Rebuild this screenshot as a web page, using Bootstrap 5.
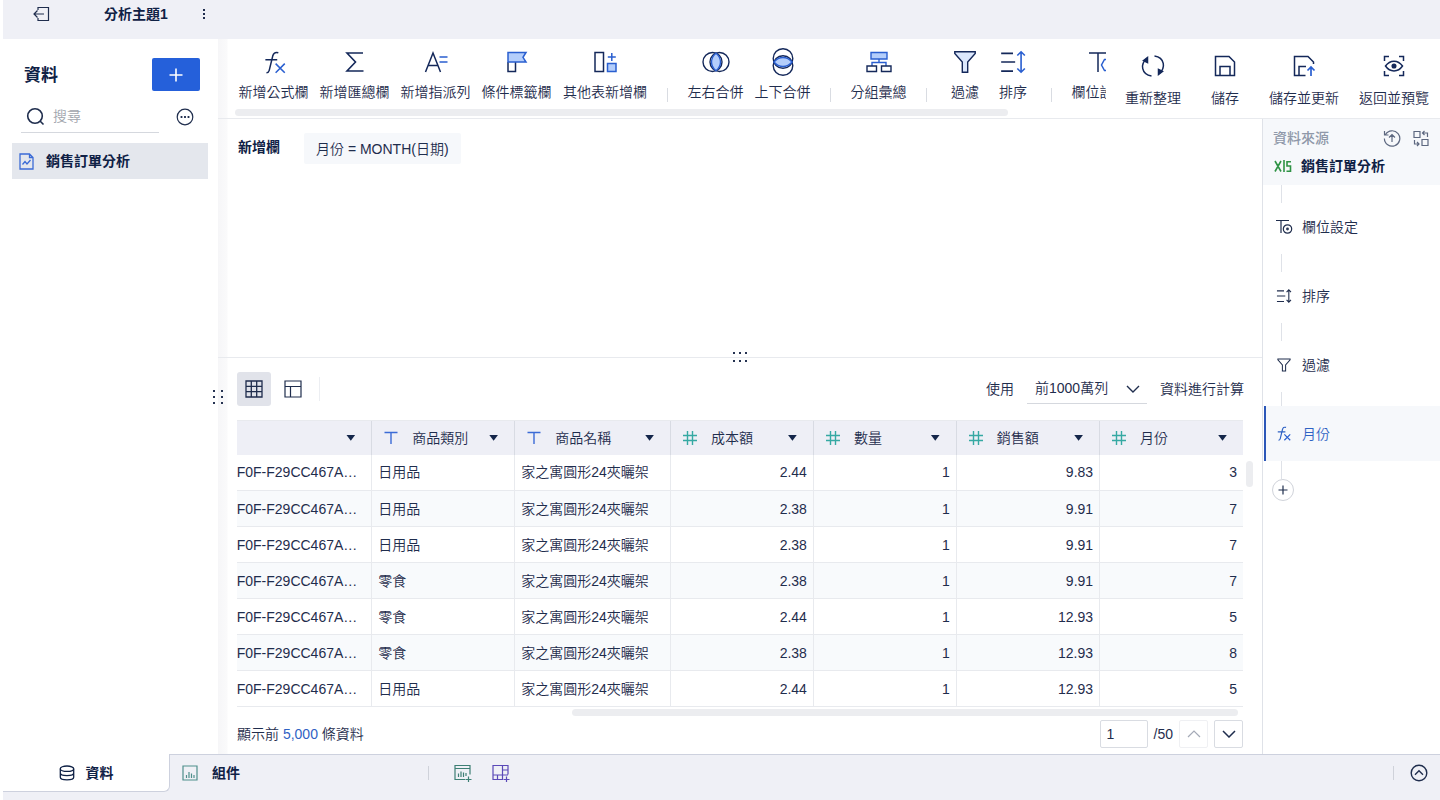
<!DOCTYPE html>
<html lang="zh-Hant">
<head>
<meta charset="utf-8">
<meta name="viewport" content="width=device-width, initial-scale=1">
<title>分析主題1</title>
<link href="https://cdn.jsdelivr.net/npm/bootstrap@5.3.0/dist/css/bootstrap.min.css" rel="stylesheet">
<style>
  :root { --ink: #1f2d4d; --navy: #14285a; --blue: #2a5fd0; --line: #e8eaee; --bar: #eff0f6; --soft: #f6f8fb; }
  body { font-family: "Liberation Sans", "Noto Sans CJK TC", sans-serif; font-size: 14px; line-height: 20px; font-weight: 350; color: var(--ink); padding-left: 3px; }
  svg { display: block; fill: none; flex-shrink: 0; }
  svg:not([stroke]) { stroke: currentColor; }
  .btn { --bs-btn-font-size: 14px; --bs-btn-line-height: 20px; --bs-btn-font-weight: 350; --bs-btn-color: var(--ink); --bs-btn-border-width: 0; --bs-btn-padding-x: 0; --bs-btn-padding-y: 0; }
  .strong { font-weight: 700; color: #0f2145; }
  .topbar { background: var(--bar); height: 39px; padding: 0 0 11px 30px; }
  .topic { margin-left: 54px; }
  .sidebar { width: 215px; padding: 19px 10px 0 9px; }
  .side-title { font-size: 17px; margin: 4px 0 0; }
  .side-search { margin: 9px 14px 10px 9px; }
  .btn-add { width: 48px; height: 33px; background: #2560da; border-radius: 2px; color: #fff; }
  .searchbox { border-bottom: 1px solid #d5d8de; width: 138px; height: 33px; gap: 8px; padding-left: 5px; }
  .searchbox input { border: 0; padding: 0; width: 90px; outline: 0; font-weight: 350; }
  .searchbox input::placeholder { color: #a2a6ae; }
  .side-item { background: #e4e7ed; height: 36px; padding: 0 7px; gap: 12px; text-decoration: none; }
  .workspace { background: linear-gradient(90deg, #f6f6f8, #fafafb 9px, #fff 10px) no-repeat; }
  .toolbar { height: 80px; border-bottom: 1px solid var(--line); }
  .tools { padding: 9px 0 0 1px; margin-left: 14px; overflow: hidden; flex: 0 1 874px; }
  .tool { display: flex; flex-direction: column; align-items: center; gap: 6px; white-space: nowrap; color: var(--ink) !important; flex-shrink: 0; min-width: 48px; }
  .tool svg { color: var(--navy); }
  .t4 { width: 67px; } .t5 { width: 81px; } .t6 { width: 96px; }
  .rule { width: 1px; height: 14px; background: #d9dce2; margin: 40px 14px 0; flex-shrink: 0; }
  .thumb { background: #ecedf0; border-radius: 4px; height: 7px; }
  .actions { gap: 20px; padding: 13px 11px 0 0; margin-left: auto; }
  .actions .tool { gap: 8px; justify-content: flex-start; }
  .chip { background: var(--soft); padding: 6px 12px 5px; border-radius: 2px; }
  .grip { position: absolute; z-index: 2; stroke: none !important; fill: #263352; }
  .pane-up { border-bottom: 1px solid var(--line); padding: 14px 18px 0 20px; }
  .pane-low { padding: 14px 0 6px 19px; }
  .viewbtn { width: 34px; height: 34px; border-radius: 3px; display: flex; align-items: center; justify-content: center; }
  .viewbtn.active { background: #e1e3ea; }
  .view-row { padding-right: 18px; margin-bottom: 14px; gap: 5px; }
  .rows-select { width: 120px; height: 29px; padding: 0 30px 0 8px; border: 0; border-bottom: 1px solid #d5d8de; border-radius: 0; font-size: 14px; font-weight: 350; color: var(--ink);
    background: url("data:image/svg+xml,%3Csvg xmlns='http://www.w3.org/2000/svg' width='14' height='8' fill='none' stroke='%231f2d4d' stroke-width='1.4'%3E%3Cpath d='M1 1l6 6 6-6'/%3E%3C/svg%3E") no-repeat right 7px center; }
  .sheet { table-layout: fixed; width: 100%; border-collapse: collapse; margin: 0; }
  .sheet th { height: 34px; background: #eeeff6; font-weight: 350; border-left: 1px solid #d8dbe3; border-top: 1px solid var(--line); padding: 0 16px 0 12px; }
  .sheet th span { display: flex; align-items: center; gap: 14px; }
  .sheet td { height: 36px; padding: 0 6px; border-left: 1px solid var(--line); border-bottom: 1px solid var(--line); white-space: nowrap; overflow: hidden; }
  .sheet th:first-child, .sheet td:first-child { border-left: 0; }
  .sheet tbody tr:nth-child(even) { background: #f8fafc; }
  .code { display: flex; justify-content: flex-end; padding-right: 8px; margin-left: -6px; overflow: hidden; }
  .caret { width: 9px; height: 6px; background: #14264a; clip-path: polygon(0 0, 100% 0, 50% 100%); margin-left: auto; }
  .page-no { width: 48px; height: 28px; border: 1px solid #d9dce2; border-radius: 2px; padding: 0 6px; font-weight: 350; color: var(--ink); }
  .pager { width: 29px; height: 28px; border: 1px solid #d9dce2 !important; border-radius: 2px; display: flex; align-items: center; justify-content: center; }
  .pager:disabled { opacity: .4; }
  .foot-row { gap: 6px; padding-right: 19px; margin-top: 4px; }
  .flow { width: 178px; border-left: 1px solid #dfe2e8; flex-shrink: 0; }
  .flow-head { background: var(--soft); height: 66px; padding: 9px 11px 0 10px; }
  .link-line { width: 1px; height: 18px; background: #dfe2e8; margin: 0 0 -4px 18px; }
  .step { height: 55px; gap: 9px; padding-left: 9px; color: var(--ink); text-decoration: none; position: relative; border-left: 2px solid transparent; margin-left: 1px; }
  .step.active { background: var(--soft); border-color: #2c57b8; color: #2f62c4; }
  .plus { width: 22px; height: 22px; border: 1px solid #d0d3da !important; border-radius: 50%; margin: 4px 0 0 9px; display: flex; align-items: center; justify-content: center; }
  .bottombar { background: var(--bar); border-top: 1px solid #cdd1de; height: 46px; }
  .tab-on { background: #fff; width: 167px; height: 38px; margin-top: -1px; border: 1px solid #cdd1de; border-width: 0 1px 1px 0; border-radius: 0 0 6px 0; }
  .bottombar a { gap: 11px; text-decoration: none; }
  .tab-row { padding: 0 8px; margin-bottom: 9px; }
  .vline { width: 1px; height: 14px; background: #cfd2da; }
</style>
</head>
<body>
<svg width="0" height="0" class="position-absolute">
  <symbol id="fx" viewBox="0 0 24 24"><path d="M16 3.500C12.800 2.600 11.500 4 10.800 6.500L7.500 20c-.4 1.300-1 2-2.500 2M4 10h11"/><path stroke="#2a5fd0" d="M13.500 13.500l8.500 8.500M22 13.500L13.500 22"/></symbol>
  <symbol id="funnel" viewBox="0 0 24 24"><path fill="var(--tint,none)" d="M2.500 2.500h19v1.500L14.500 12v9.500h-5V12l-7-8z"/></symbol>
  <symbol id="sort" viewBox="0 0 24 24"><path d="M1 4h11M1 12h13M1 20.500h11"/><path stroke="var(--acc,currentColor)" d="M19.500 2.500v19M16 6l3.500-3.500L23 6M16 18l3.500 3.500L23 18"/></symbol>
  <symbol id="hash" viewBox="0 0 14 14"><path d="M4.500 0v14M9.500 0v14M0 4.500h14M0 9.500h14"/></symbol>
  <symbol id="tee" viewBox="0 0 14 14"><path d="M.500 1.500h13M7 1.500V13"/></symbol>
</svg>
<div class="d-flex flex-column min-vh-100">
  <header class="topbar d-flex align-items-center">
    <button class="btn" aria-label="返回"><svg width="17" height="16" viewBox="0 0 17 16" stroke-width="1.200"><path d="M5 4V1.500h10.500v13H5V12M1 8h10M4.500 4.500L1 8l3.500 3.500"/></svg></button>
    <span class="strong topic">分析主題1</span>
    <button class="btn ms-4 ps-2" aria-label="更多"><svg width="8" height="12" viewBox="0 0 8 12" stroke="none"><path fill="#1f2d4d" d="M3 1h2v2H3zM3 5h2v2H3zM3 9h2v2H3z"/></svg></button>
  </header>

  <main class="d-flex flex-grow-1">
    <aside class="sidebar position-relative flex-shrink-0">
      <div class="d-flex justify-content-between align-items-center ps-2 pe-2 ms-1">
        <h1 class="side-title strong">資料</h1>
        <button class="btn btn-add" aria-label="新增"><svg class="mx-auto" width="14" height="14" viewBox="0 0 14 14" stroke-width="1.600"><path d="M7 .500v13M.500 7h13"/></svg></button>
      </div>
      <div class="side-search d-flex align-items-center justify-content-between">
        <label class="searchbox d-flex align-items-center">
          <svg width="19" height="19" viewBox="0 0 19 19" stroke-width="1.600"><circle cx="9" cy="9" r="7.300"/><path d="M14 14l3.500 3.500"/></svg>
          <input type="text" placeholder="搜尋" aria-label="搜尋">
        </label>
        <button class="btn" aria-label="選項"><svg width="18" height="18" viewBox="0 0 18 18" stroke-width="1.200"><circle cx="9" cy="9" r="7.800"/><path stroke-width="1.800" d="M4.600 9h1.800M8.100 9h1.800M11.600 9h1.800"/></svg></button>
      </div>
      <a href="#" class="side-item strong d-flex align-items-center"><svg width="15" height="17" viewBox="0 0 15 17" stroke="#3b6bd6" stroke-width="1.300"><path d="M1 1h9.500L14 4.500V16H1zM10.500 1v3.500H14M3.500 11.500l2.500-3 2 2.500 3.500-4"/></svg>銷售訂單分析</a>
      <svg class="grip top-50 start-100 translate-middle" width="12" height="18" viewBox="0 0 12 18"><path d="M1 2h2v2H1zM9 2h2v2H9zM1 8h2v2H1zM9 8h2v2H9zM1 14h2v2H1zM9 14h2v2H9z"/></svg>
    </aside>

    <section class="workspace flex-grow-1 d-flex flex-column" style="min-width:0">
      <div class="toolbar d-flex">
        <div class="tools">
          <div class="d-flex">
            <button class="btn tool t5"><svg width="28" height="28" viewBox="-1 0 26 24" stroke-width="1.400"><use href="#fx" width="24" height="24"/></svg>新增公式欄</button>
            <button class="btn tool t5"><svg width="28" height="28" viewBox="0 0 28 28" stroke-width="1.600"><path d="M22 5H6l8.500 9L6 23h16.500"/></svg>新增匯總欄</button>
            <button class="btn tool t5"><svg width="28" height="28" viewBox="0 0 28 28" stroke-width="1.500"><path d="M3.500 24L11 5l7.500 19M6.500 17.500h9"/><path stroke="#2a5fd0" d="M17.500 9h8M17.500 14h8"/></svg>新增指派列</button>
            <button class="btn tool t5"><svg width="28" height="28" viewBox="0 0 28 28" stroke-width="1.500"><path d="M5 14v9.500h7.500V14"/><path stroke="#2a5fd0" fill="#b4cefb" d="M5 4.500h18l-3 4.800 3 4.700H5z"/></svg>條件標籤欄</button>
            <button class="btn tool t6"><svg width="28" height="28" viewBox="0 0 28 28" stroke-width="1.500"><path d="M4 4.500h8.500v19H4z"/><path stroke="#2a5fd0" fill="#b4cefb" d="M16.500 15.500H25v8h-8.500z"/><path stroke="#2a5fd0" d="M20.800 5v8M16.800 9h8"/></svg>其他表新增欄</button>
            <i class="rule"></i>
            <button class="btn tool t4"><svg width="28" height="28" viewBox="0 0 28 28" stroke-width="1.400"><circle cx="10.500" cy="14" r="9.500"/><circle cx="17.500" cy="14" r="9.500"/><path stroke="#2a5fd0" fill="#b4cefb" d="M14 5.200c6 5 6 12.600 0 17.600-6-5-6-12.600 0-17.600z"/></svg>左右合併</button>
            <button class="btn tool t4"><svg width="28" height="28" viewBox="0 0 28 28" stroke-width="1.400"><circle cx="14" cy="10.500" r="9.800"/><circle cx="14" cy="17.500" r="9.800"/><path stroke="#2a5fd0" fill="#b4cefb" d="M4.900 14c5-6 13.200-6 18.200 0-5 6-13.200 6-18.200 0z"/></svg>上下合併</button>
            <i class="rule"></i>
            <button class="btn tool t4"><svg width="28" height="28" viewBox="0 0 28 28" stroke-width="1.400"><path stroke="#2a5fd0" fill="#b4cefb" d="M6 4.500h16v6.500H6z"/><path stroke="#2a5fd0" d="M14 11v3.500M7 18v-3.500h14V18"/><path d="M2 18h9.500v5.500H2zM16.500 18H26v5.500h-9.500z"/></svg>分組彙總</button>
            <i class="rule"></i>
            <button class="btn tool" style="--tint:#dce8fd"><svg width="28" height="28" viewBox="-1 -1 26 26" stroke-width="1.300"><use href="#funnel" width="24" height="24"/></svg>過濾</button>
            <button class="btn tool" style="--acc:#2a5fd0"><svg width="28" height="28" viewBox="-1 -1 26 26" stroke-width="1.500"><use href="#sort" width="24" height="24"/></svg>排序</button>
            <i class="rule"></i>
            <button class="btn tool t4"><svg width="28" height="28" viewBox="0 0 28 28" stroke-width="1.500"><path d="M3 5h20M12 5v19"/><path stroke="#2a5fd0" d="M18.500 11.500h6l3.500 5.500-3.500 5.500h-6L15.500 17z"/></svg>欄位設定</button>
          </div>
          <div class="thumb" style="width:88.500%;margin:7px 0 0 2px"></div>
        </div>
        <div class="actions d-flex">
          <button class="btn tool"><svg width="28" height="28" viewBox="0 0 28 28" stroke-width="1.500"><path d="M12.500 24C2.500 22.500.500 12 8.500 6M15.500 4C25.500 5.500 27.500 16 19.500 22"/><path fill="currentColor" d="M8.500 5.500v5l-4-2zM19.500 22.500v-5l4 2z"/></svg>重新整理</button>
          <button class="btn tool"><svg width="28" height="28" viewBox="0 0 28 28" stroke-width="1.500"><path d="M4.500 4.500H18l5.500 5.500v13.500h-19zM9 23.500v-9h10v9"/></svg>儲存</button>
          <button class="btn tool"><svg width="28" height="28" viewBox="0 0 28 28" stroke-width="1.500"><path d="M15.500 23.500h-11v-19H18l5.500 5.500v2M9 23.500v-9h7"/><path stroke="#2a5fd0" stroke-width="1.700" d="M21 24v-9M17.500 18.500L21 15l3.500 3.500"/></svg>儲存並更新</button>
          <button class="btn tool"><svg width="28" height="28" viewBox="0 0 28 28" stroke-width="1.500"><path d="M4.500 9V4.500H9M19 4.500h4.500V9M23.500 19v4.500H19M9 23.500H4.500V19M5.500 14c4.500-6.500 12.500-6.500 17 0-4.500 6.500-12.500 6.500-17 0z"/><circle cx="14" cy="14" r="1.800" fill="currentColor"/></svg>返回並預覽</button>
        </div>
      </div>

      <div class="d-flex flex-grow-1">
        <div class="flex-grow-1 d-flex flex-column" style="min-width:0">
          <div class="pane-up flex-grow-1 position-relative d-flex align-items-start gap-4">
            <span class="strong pt-1">新增欄</span>
            <span class="chip">月份 = MONTH(日期)</span>
            <svg class="grip top-100 start-50 translate-middle" width="18" height="12" viewBox="0 0 18 12"><path d="M2 1h2v2H2zM8 1h2v2H8zM14 1h2v2h-2zM2 9h2v2H2zM8 9h2v2H8zM14 9h2v2h-2z"/></svg>
          </div>
          <div class="pane-low">
            <div class="view-row d-flex align-items-center">
              <button class="btn viewbtn active" aria-label="表格"><svg width="18" height="18" viewBox="0 0 18 18" stroke-width="1.300"><path d="M1 1h16v16H1zM1 6.300h16M1 11.700h16M6.300 1v16M11.700 1v16"/></svg></button>
              <button class="btn viewbtn" aria-label="版面"><svg width="18" height="18" viewBox="0 0 18 18" stroke-width="1.200"><path d="M1 1h16v16H1zM1 6.500h16M6.500 6.500V17"/></svg></button>
              <i class="vline ms-1" style="height:24px;background:#eceef2"></i>
              <label for="rowSel" class="ms-auto me-2">使用</label>
              <select id="rowSel" class="form-select rows-select"><option>前1000萬列</option></select>
              <span class="ms-2">資料進行計算</span>
            </div>
            <div class="d-flex">
              <table class="sheet">
                <colgroup><col style="width:13.400%"><col style="width:14.200%"><col style="width:15.500%"><col style="width:14.200%"><col style="width:14.200%"><col style="width:14.250%"><col style="width:14.250%"></colgroup>
                <thead><tr>
                  <th><span><i class="caret"></i></span></th>
                  <th><span><svg width="14" height="14" stroke="#3b6bd6" stroke-width="1.400"><use href="#tee"/></svg>商品類別<i class="caret"></i></span></th>
                  <th><span><svg width="14" height="14" stroke="#3b6bd6" stroke-width="1.400"><use href="#tee"/></svg>商品名稱<i class="caret"></i></span></th>
                  <th><span><svg width="14" height="14" stroke="#35a9a3" stroke-width="1.400"><use href="#hash"/></svg>成本額<i class="caret"></i></span></th>
                  <th><span><svg width="14" height="14" stroke="#35a9a3" stroke-width="1.400"><use href="#hash"/></svg>數量<i class="caret"></i></span></th>
                  <th><span><svg width="14" height="14" stroke="#35a9a3" stroke-width="1.400"><use href="#hash"/></svg>銷售額<i class="caret"></i></span></th>
                  <th><span><svg width="14" height="14" stroke="#35a9a3" stroke-width="1.400"><use href="#hash"/></svg>月份<i class="caret"></i></span></th>
                </tr></thead>
                <tbody>
                  <tr><td><span class="code">F0F-F29CC467A…</span></td><td>日用品</td><td>家之寓圓形24夾曬架</td><td class="text-end">2.44</td><td class="text-end">1</td><td class="text-end">9.83</td><td class="text-end">3</td></tr>
                  <tr><td><span class="code">F0F-F29CC467A…</span></td><td>日用品</td><td>家之寓圓形24夾曬架</td><td class="text-end">2.38</td><td class="text-end">1</td><td class="text-end">9.91</td><td class="text-end">7</td></tr>
                  <tr><td><span class="code">F0F-F29CC467A…</span></td><td>日用品</td><td>家之寓圓形24夾曬架</td><td class="text-end">2.38</td><td class="text-end">1</td><td class="text-end">9.91</td><td class="text-end">7</td></tr>
                  <tr><td><span class="code">F0F-F29CC467A…</span></td><td>零食</td><td>家之寓圓形24夾曬架</td><td class="text-end">2.38</td><td class="text-end">1</td><td class="text-end">9.91</td><td class="text-end">7</td></tr>
                  <tr><td><span class="code">F0F-F29CC467A…</span></td><td>零食</td><td>家之寓圓形24夾曬架</td><td class="text-end">2.44</td><td class="text-end">1</td><td class="text-end">12.93</td><td class="text-end">5</td></tr>
                  <tr><td><span class="code">F0F-F29CC467A…</span></td><td>零食</td><td>家之寓圓形24夾曬架</td><td class="text-end">2.38</td><td class="text-end">1</td><td class="text-end">12.93</td><td class="text-end">8</td></tr>
                  <tr><td><span class="code">F0F-F29CC467A…</span></td><td>日用品</td><td>家之寓圓形24夾曬架</td><td class="text-end">2.44</td><td class="text-end">1</td><td class="text-end">12.93</td><td class="text-end">5</td></tr>
                </tbody>
              </table>
              <div class="flex-shrink-0" style="width:19px;padding:41px 0 0 3px"><div class="thumb" style="width:7px;height:26px"></div></div>
            </div>
            <div class="pe-4"><div class="thumb ms-auto" style="width:66.500%;margin-top:2px"></div></div>
            <div class="foot-row d-flex align-items-center">
              <span>顯示前 <span style="color:#2f62c4">5,000</span> 條資料</span>
              <input class="page-no ms-auto" type="text" value="1" aria-label="頁碼">
              <span>/50</span>
              <button class="btn pager" disabled aria-label="上一頁"><svg width="14" height="8" viewBox="0 0 14 8" stroke-width="1.200"><path d="M1 7l6-6 6 6"/></svg></button>
              <button class="btn pager" aria-label="下一頁"><svg width="14" height="8" viewBox="0 0 14 8" stroke-width="1.500"><path d="M1 1l6 6 6-6"/></svg></button>
            </div>
          </div>
        </div>

        <nav class="flow">
          <div class="flow-head">
            <div class="d-flex align-items-center mb-2">
              <span class="me-auto" style="color:#8f98a9;font-weight:500">資料來源</span>
              <button class="btn" aria-label="更新來源"><svg width="18" height="18" viewBox="0 0 18 18" stroke="#5d6880" stroke-width="1.200"><path d="M2.500 5.500A7.700 7.700 0 1 1 1.400 9.500M1.500 2v4h4M9 13V5.500M6 8.500l3-3 3 3"/></svg></button>
              <button class="btn ms-2 ps-1" aria-label="替換"><svg width="16" height="17" viewBox="0 0 16 17" stroke="#5d6880" stroke-width="1.200"><path d="M1 1.500h6v6H1zM9 9.500h6v6H9zM9.500 3h5v4M11.500 1l-2 2 2 2M1.500 10v4H6M4 12l2 2-2 2"/></svg></button>
            </div>
            <div class="d-flex align-items-center gap-2"><svg width="20" height="14" viewBox="0 0 20 14" stroke="#2f9345" stroke-width="1.600"><path d="M2 2l6 10.500M8 2L2 12.500M11 1v12M18 2.800h-4V7h3.500v5.200h-4"/></svg><span class="strong">銷售訂單分析</span></div>
          </div>
          <div class="link-line"></div>
          <a href="#" class="step d-flex align-items-center"><svg width="18" height="18" viewBox="0 0 18 18" stroke-width="1.200"><path d="M1 2.500h13M6 2.500V15"/><circle cx="12.500" cy="11" r="4.200"/><circle cx="12.500" cy="11" r=".800"/></svg>欄位設定</a>
          <div class="link-line"></div>
          <a href="#" class="step d-flex align-items-center"><svg width="18" height="18" viewBox="-2 -2 28 28" stroke-width="1.700"><use href="#sort" width="24" height="24"/></svg>排序</a>
          <div class="link-line"></div>
          <a href="#" class="step d-flex align-items-center"><svg width="18" height="18" viewBox="0 0 28 28" stroke-width="1.600"><use href="#funnel" x="2" y="2" width="24" height="24"/></svg>過濾</a>
          <div class="link-line"></div>
          <a href="#" class="step active d-flex align-items-center"><svg width="18" height="18" viewBox="0 0 26 26" stroke-width="1.700"><use href="#fx" width="24" height="24"/></svg>月份</a>
          <div class="link-line"></div>
          <button class="btn plus" aria-label="新增步驟"><svg width="10" height="10" viewBox="0 0 10 10" stroke-width="1.200"><path d="M5 .500v9M.500 5h9"/></svg></button>
        </nav>
      </div>
    </section>
  </main>

  <footer class="bottombar d-flex">
    <a href="#" class="tab-on strong d-flex align-items-center justify-content-center"><svg width="16" height="16" viewBox="0 0 16 16" stroke-width="1.300"><ellipse cx="8" cy="3.700" rx="6.700" ry="2.700"/><path d="M1.300 3.700v8.600c0 3.500 13.400 3.500 13.400 0V3.700M1.300 8c0 3.500 13.400 3.500 13.400 0"/></svg>資料</a>
    <div class="tab-row d-flex align-items-center flex-grow-1">
      <a href="#" class="strong d-flex align-items-center ms-1" style="gap:14px"><svg width="16" height="16" viewBox="0 0 16 16" stroke="#4f8f8c" stroke-width="1.200"><path d="M1 1h14v14H1zM4.500 13v-3M7 13V7M9.500 13V8.500M12 13v-3"/></svg>組件</a>
      <i class="vline" style="margin:0 25px 0 188px"></i>
      <button class="btn" aria-label="新增組件"><svg width="18" height="18" viewBox="0 0 18 18" stroke="#3d7f74" stroke-width="1.200"><path d="M11 15.500H1v-14h15v9M1 4.500h15M4.500 13V9.500M7 13V7.500M9.500 13V8.500M12 12v-3M11.500 15.500h6M14.500 12.500v6"/></svg></button>
      <button class="btn ms-3 ps-1" aria-label="新增儀表板"><svg width="18" height="18" viewBox="0 0 18 18" stroke="#5a49b8" stroke-width="1.200"><path d="M11 15.500H1v-14h15v9M10.500 1.500v14M1 11h15M10.500 6H16M5.500 11v4.500M11.500 15.500h6M14.500 12.500v6"/></svg></button>
      <i class="vline ms-auto me-3"></i>
      <button class="btn me-1" aria-label="展開"><svg width="18" height="18" viewBox="0 0 18 18" stroke-width="1.400"><circle cx="9" cy="9" r="7.800"/><path d="M5 10.800l4-4 4 4"/></svg></button>
    </div>
  </footer>
</div>
<script src="https://cdn.jsdelivr.net/npm/bootstrap@5.3.0/dist/js/bootstrap.bundle.min.js"></script>
</body>
</html>
